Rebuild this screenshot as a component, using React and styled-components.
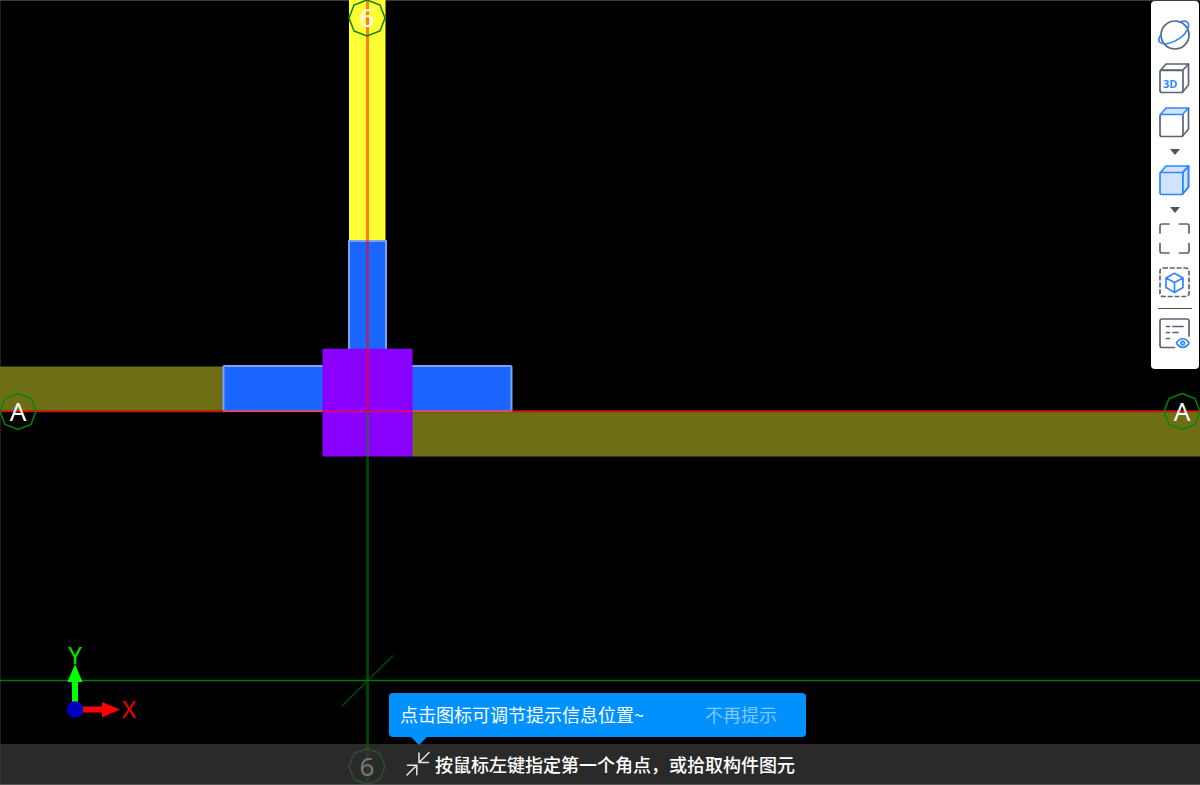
import React from "react";
import styled, { createGlobalStyle } from "styled-components";

const sans = `"Noto Sans", "Noto Sans CJK SC", sans-serif`;
const ink = "#5b6475";
const accent = "#2f88ff";

const GlobalStyle = createGlobalStyle`
  *, *::before, *::after { box-sizing: border-box; }
  body { margin: 0; background: #000; font-family: "Noto Sans CJK SC", sans-serif; }
`;

const Viewport = styled.main`
  position: relative;
  height: 100vh;
  overflow: hidden;
  background: #000;
`;

const Drawing = styled.svg`
  display: block;
  width: 100%;
  height: 100%;
`;

const AxisLabel = styled.text`
  font-family: ${sans};
  font-size: ${(p) => p.$size}px;
  text-anchor: middle;
`;

const Toolbar = styled.nav`
  position: absolute;
  top: 1px;
  right: 1px;
  width: 48px;
  padding: 12px 0 13px;
  display: flex;
  flex-direction: column;
  align-items: center;
  background: #fff;
  border-radius: 4px;
`;

const ToolButton = styled.button`
  display: flex;
  align-items: center;
  justify-content: center;
  width: 48px;
  height: ${(p) => (p.$menu ? 14 : 44)}px;
  padding: 0;
  border: 0;
  background: none;
  cursor: pointer;
`;

const Icon = styled.svg`
  display: block;
  width: ${(p) => p.$w || 32}px;
  height: ${(p) => p.$h || 32}px;
  overflow: visible;
  fill: none;
  stroke: ${(p) => p.$color || ink};
  stroke-width: 1.7;
  stroke-linejoin: round;
  stroke-linecap: round;
`;

const CubeText = styled.text`
  font: 700 11px "Open Sans", sans-serif;
  fill: ${accent};
  stroke: none;
`;

const Divider = styled.hr`
  width: 34px;
  height: 1px;
  margin: 3px 0;
  border: 0;
  background: #4c4c4c;
`;

const StatusBar = styled.footer`
  position: absolute;
  left: 0;
  right: 0;
  bottom: 0;
  height: 41px;
  display: flex;
  justify-content: center;
  background: rgba(60, 60, 60, 0.7);
  border-bottom: 1px solid #555;
`;

const Prompt = styled.div`
  position: relative;
  display: flex;
  align-items: center;
  gap: 6px;
  color: #fff;
  font-size: 18px;
  font-weight: 500;
  line-height: 24px;
  white-space: nowrap;
`;

const CollapseButton = styled.button`
  padding: 0;
  border: 0;
  background: none;
  cursor: pointer;
`;

const Tip = styled.div`
  position: absolute;
  left: -16px;
  bottom: 100%;
  margin-bottom: 7px;
  width: 417px;
  height: 44px;
  padding: 0 29px 2px 11px;
  display: flex;
  align-items: center;
  justify-content: space-between;
  background: #0091ff;
  border-radius: 4px;
  font-weight: 400;

  &::after {
    content: "";
    position: absolute;
    top: 100%;
    left: 22px;
    border: 8px solid transparent;
    border-top-color: #0091ff;
    border-bottom: 0;
  }
`;

const DismissButton = styled.button`
  padding: 0;
  border: 0;
  background: none;
  color: #80c8ff;
  font: inherit;
  cursor: pointer;
`;

const front = "M1 9 Q1 7 3 7 H22 Q24 7 24 9 V27.5 Q24 29.5 22 29.5 H3 Q1 29.5 1 27.5 Z";
const lid = "M1.5 7.5 L7 1 H29.5 L23.5 7.5 Z";
const side = "M29.5 1 V22 L24 28.5";

function Cube({ variant }) {
  const solid = variant === "solid";
  return (
    <Icon viewBox="0 0 32 32" $color={solid ? accent : ink}>
      <path d={front} fill={solid ? "#d2e4fb" : "none"} />
      {solid && <path d="M24 7.5 L29.5 1 V22 L24 28.5 Z" fill="#d2e4fb" />}
      <path d={side} />
      <path
        d={lid}
        fill={variant === "3d" ? "none" : "#d2e4fb"}
        stroke={variant === "3d" ? ink : accent}
      />
      {variant === "3d" && <CubeText x="4" y="25">3D</CubeText>}
    </Icon>
  );
}

function Caret() {
  return (
    <Icon $w={12} $h={6} viewBox="0 0 12 6">
      <path d="M1 0 H11 L6 6 Z" fill="#4c5361" stroke="none" />
    </Icon>
  );
}

function AxisBubble({ x, y, label }) {
  return (
    <g transform={`translate(${x} ${y})`}>
      <polygon
        points="0,-18 13,-13 18,0 13,13 0,18 -13,13 -18,0 -13,-13"
        fill="none"
        stroke="#078407"
        strokeWidth="1.5"
      />
      <AxisLabel $size={26} y="9" fill="#fff">{label}</AxisLabel>
    </g>
  );
}

function Plan() {
  return (
    <Drawing viewBox="0 0 1200 785" preserveAspectRatio="xMidYMid slice">
      <path d="M0 785 V0.5 H1200" fill="none" stroke="#3c3c3c" />
      <rect x="349" y="0" width="36.5" height="241" fill="#ffff33" />
      <rect x="0" y="366.5" width="224" height="44.5" fill="#6e6e16" />
      <rect x="412" y="411" width="788" height="45.5" fill="#6e6e16" />
      <g fill="#1a66ff" stroke="#7ea0f2" strokeWidth="2">
        <rect x="349" y="241" width="37" height="115" />
        <rect x="223.5" y="366" width="288" height="45" rx="1" />
      </g>
      <rect x="322.5" y="348.7" width="90" height="107.8" fill="#8a00ff" />

      <path d="M0 411.3 H322 M413 411.3 H1200" stroke="#c8140a" strokeWidth="2" />
      <path d="M223 411 H322 M413 411 H512" stroke="#c8507a" strokeWidth="2" />
      <path d="M322 411.3 H413" stroke="#dc0080" strokeWidth="2" />
      <path d="M367.5 0 V349" stroke="#ff0000" strokeOpacity="0.5" strokeWidth="3" />
      <path d="M367.5 349 V411" stroke="#c4007a" strokeWidth="3" />
      <path d="M367.5 412 V456.5" stroke="#504080" strokeWidth="3" />
      <path d="M367.5 456.5 V785" stroke="#004200" strokeWidth="3" />
      <path d="M342 706 L393 655.5" stroke="#004a00" strokeWidth="1.6" />
      <path d="M0 680.4 H1200" stroke="#007a00" strokeWidth="1.5" />

      <AxisBubble x={367} y={18} label="6" />
      <AxisBubble x={18} y={411.5} label="A" />
      <AxisBubble x={1182} y={411.5} label="A" />
      <AxisBubble x={367} y={766.5} label="6" />

      <path d="M75 706 V680" stroke="#00ff00" strokeWidth="6" />
      <path d="M75 664 L82.5 682 H67.5 Z" fill="#00ff00" />
      <path d="M80 709.5 H103" stroke="#ff0000" strokeWidth="6" />
      <path d="M120 709.5 L102 702 V717.5 Z" fill="#ff0000" />
      <circle cx="75" cy="709.5" r="8.3" fill="#0000c0" />
      <AxisLabel $size={24} x="75" y="664" fill="#00e600">Y</AxisLabel>
      <AxisLabel $size={24} x="129" y="718" fill="#f00000">X</AxisLabel>
    </Drawing>
  );
}

export default function App() {
  return (
    <Viewport>
      <GlobalStyle />
      <Plan />
      <Toolbar aria-label="View tools">
        <ToolButton aria-label="Orbit">
          <Icon viewBox="0 0 32 32">
            <circle cx="16" cy="16" r="14" />
            <path
              stroke={accent}
              d="M20.5 3.2 C24 1.7 27.4 1.8 28.8 3.8 C31 7.5 27.8 14.4 20.6 19.4 C13 24.8 3.8 26.4 .6 23 C-.8 21.4 -.2 18.8 2 15.8"
            />
          </Icon>
        </ToolButton>
        <ToolButton aria-label="3D view"><Cube variant="3d" /></ToolButton>
        <ToolButton aria-label="Top view"><Cube variant="top" /></ToolButton>
        <ToolButton aria-label="More views" $menu><Caret /></ToolButton>
        <ToolButton aria-label="Shaded"><Cube variant="solid" /></ToolButton>
        <ToolButton aria-label="More display styles" $menu><Caret /></ToolButton>
        <ToolButton aria-label="Zoom to fit">
          <Icon viewBox="0 0 32 32">
            <path d="M1 10 V3 Q1 1 3 1 H10 M20.5 1 H28 Q30 1 30 3 V10 M30 20.5 V28 Q30 30 28 30 H20.5 M10 30 H3 Q1 30 1 28 V20.5" />
          </Icon>
        </ToolButton>
        <ToolButton aria-label="Isolate selection">
          <Icon viewBox="0 0 32 32">
            <rect x="1" y="1" width="29" height="28.5" rx="3" strokeDasharray="5 1.8" strokeLinecap="butt" />
            <path stroke={accent} d="M15.5 6.3 L24 11 V20.6 L15.5 25.6 L7 20.6 V11 Z M7 11 L15.5 15.6 L24 11 M15.5 15.6 V25.6" />
          </Icon>
        </ToolButton>
        <Divider />
        <ToolButton aria-label="Display settings">
          <Icon viewBox="0 0 32 32">
            <path d="M15.5 29.5 H3 Q1 29.5 1 27.5 V3 Q1 1 3 1 H28 Q30 1 30 3 V18" />
            <path d="M7.5 8.5 H10.5 M14 8.5 H24 M7.5 14.5 H10.5 M14 14.5 H19 M7.5 20.5 H10.5" />
            <path stroke={accent} d="M17.5 25 C20.5 19.3 27 19.3 30 25 C27 30.7 20.5 30.7 17.5 25 Z" />
            <circle cx="23.7" cy="25" r="1.7" stroke={accent} />
          </Icon>
        </ToolButton>
      </Toolbar>
      <StatusBar>
        <Prompt>
          <Tip role="status">
            <span>点击图标可调节提示信息位置~</span>
            <DismissButton>不再提示</DismissButton>
          </Tip>
          <CollapseButton aria-label="Move prompt">
            <Icon $w={24} $h={24} viewBox="0 0 24 24" $color="#e8e8e8">
              <path d="M24 0.5 L14.5 10 M14 1 V10.5 H23.5 M2 23 L11 14 M2.5 13.2 H11.8 V22.8" strokeWidth="1.5" strokeLinejoin="miter" />
            </Icon>
          </CollapseButton>
          <span>按鼠标左键指定第一个角点，或拾取构件图元</span>
        </Prompt>
      </StatusBar>
    </Viewport>
  );
}
